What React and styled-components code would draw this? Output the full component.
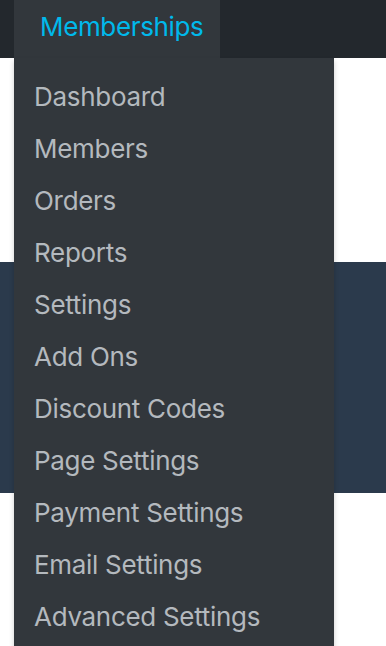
import styled, { createGlobalStyle } from 'styled-components';

const GlobalStyle = createGlobalStyle`
  html, body {
    margin: 0;
    padding: 0;
    background: #ffffff;
    overflow: hidden;
  }
  body {
    font-family: Inter, "Noto Sans", "Liberation Sans", sans-serif;
  }
`;

const Page = styled.div`
  position: relative;
  width: 386px;
  height: 646px;
  overflow: hidden;
  background: #ffffff;
`;

const AdminBar = styled.div`
  display: flex;
  height: 58px;
  padding-left: 14px;
  background: #23282d;
`;

const BarTab = styled.div`
  display: flex;
  align-items: center;
  width: 206px;
  padding: 0 0 6px 26px;
  box-sizing: border-box;
  background: #32373c;
  color: #00b9eb;
  font-size: 26px;
  letter-spacing: -0.35px;
`;

const Content = styled.div`
  padding-top: 204px;
`;

const Band = styled.div`
  height: 231px;
  background: #2b3a4c;
`;

const Dropdown = styled.ul`
  position: absolute;
  top: 58px;
  left: 14px;
  width: 320px;
  margin: 0;
  padding: 12px 0 20px;
  list-style: none;
  background: #32373c;
  box-shadow: 0 3px 5px rgba(0, 0, 0, 0.2);
`;

const Item = styled.li`
  display: flex;
  align-items: center;
  height: 52px;
  padding-left: 20px;
  color: #b4b9be;
  font-size: 26px;
  letter-spacing: -0.3px;
`;

const items = [
  'Dashboard',
  'Members',
  'Orders',
  'Reports',
  'Settings',
  'Add Ons',
  'Discount Codes',
  'Page Settings',
  'Payment Settings',
  'Email Settings',
  'Advanced Settings',
];

export default function App() {
  return (
    <Page>
      <GlobalStyle />
      <AdminBar>
        <BarTab>Memberships</BarTab>
      </AdminBar>
      <Content>
        <Band />
      </Content>
      <Dropdown>
        {items.map((label) => (
          <Item key={label}>{label}</Item>
        ))}
      </Dropdown>
    </Page>
  );
}
